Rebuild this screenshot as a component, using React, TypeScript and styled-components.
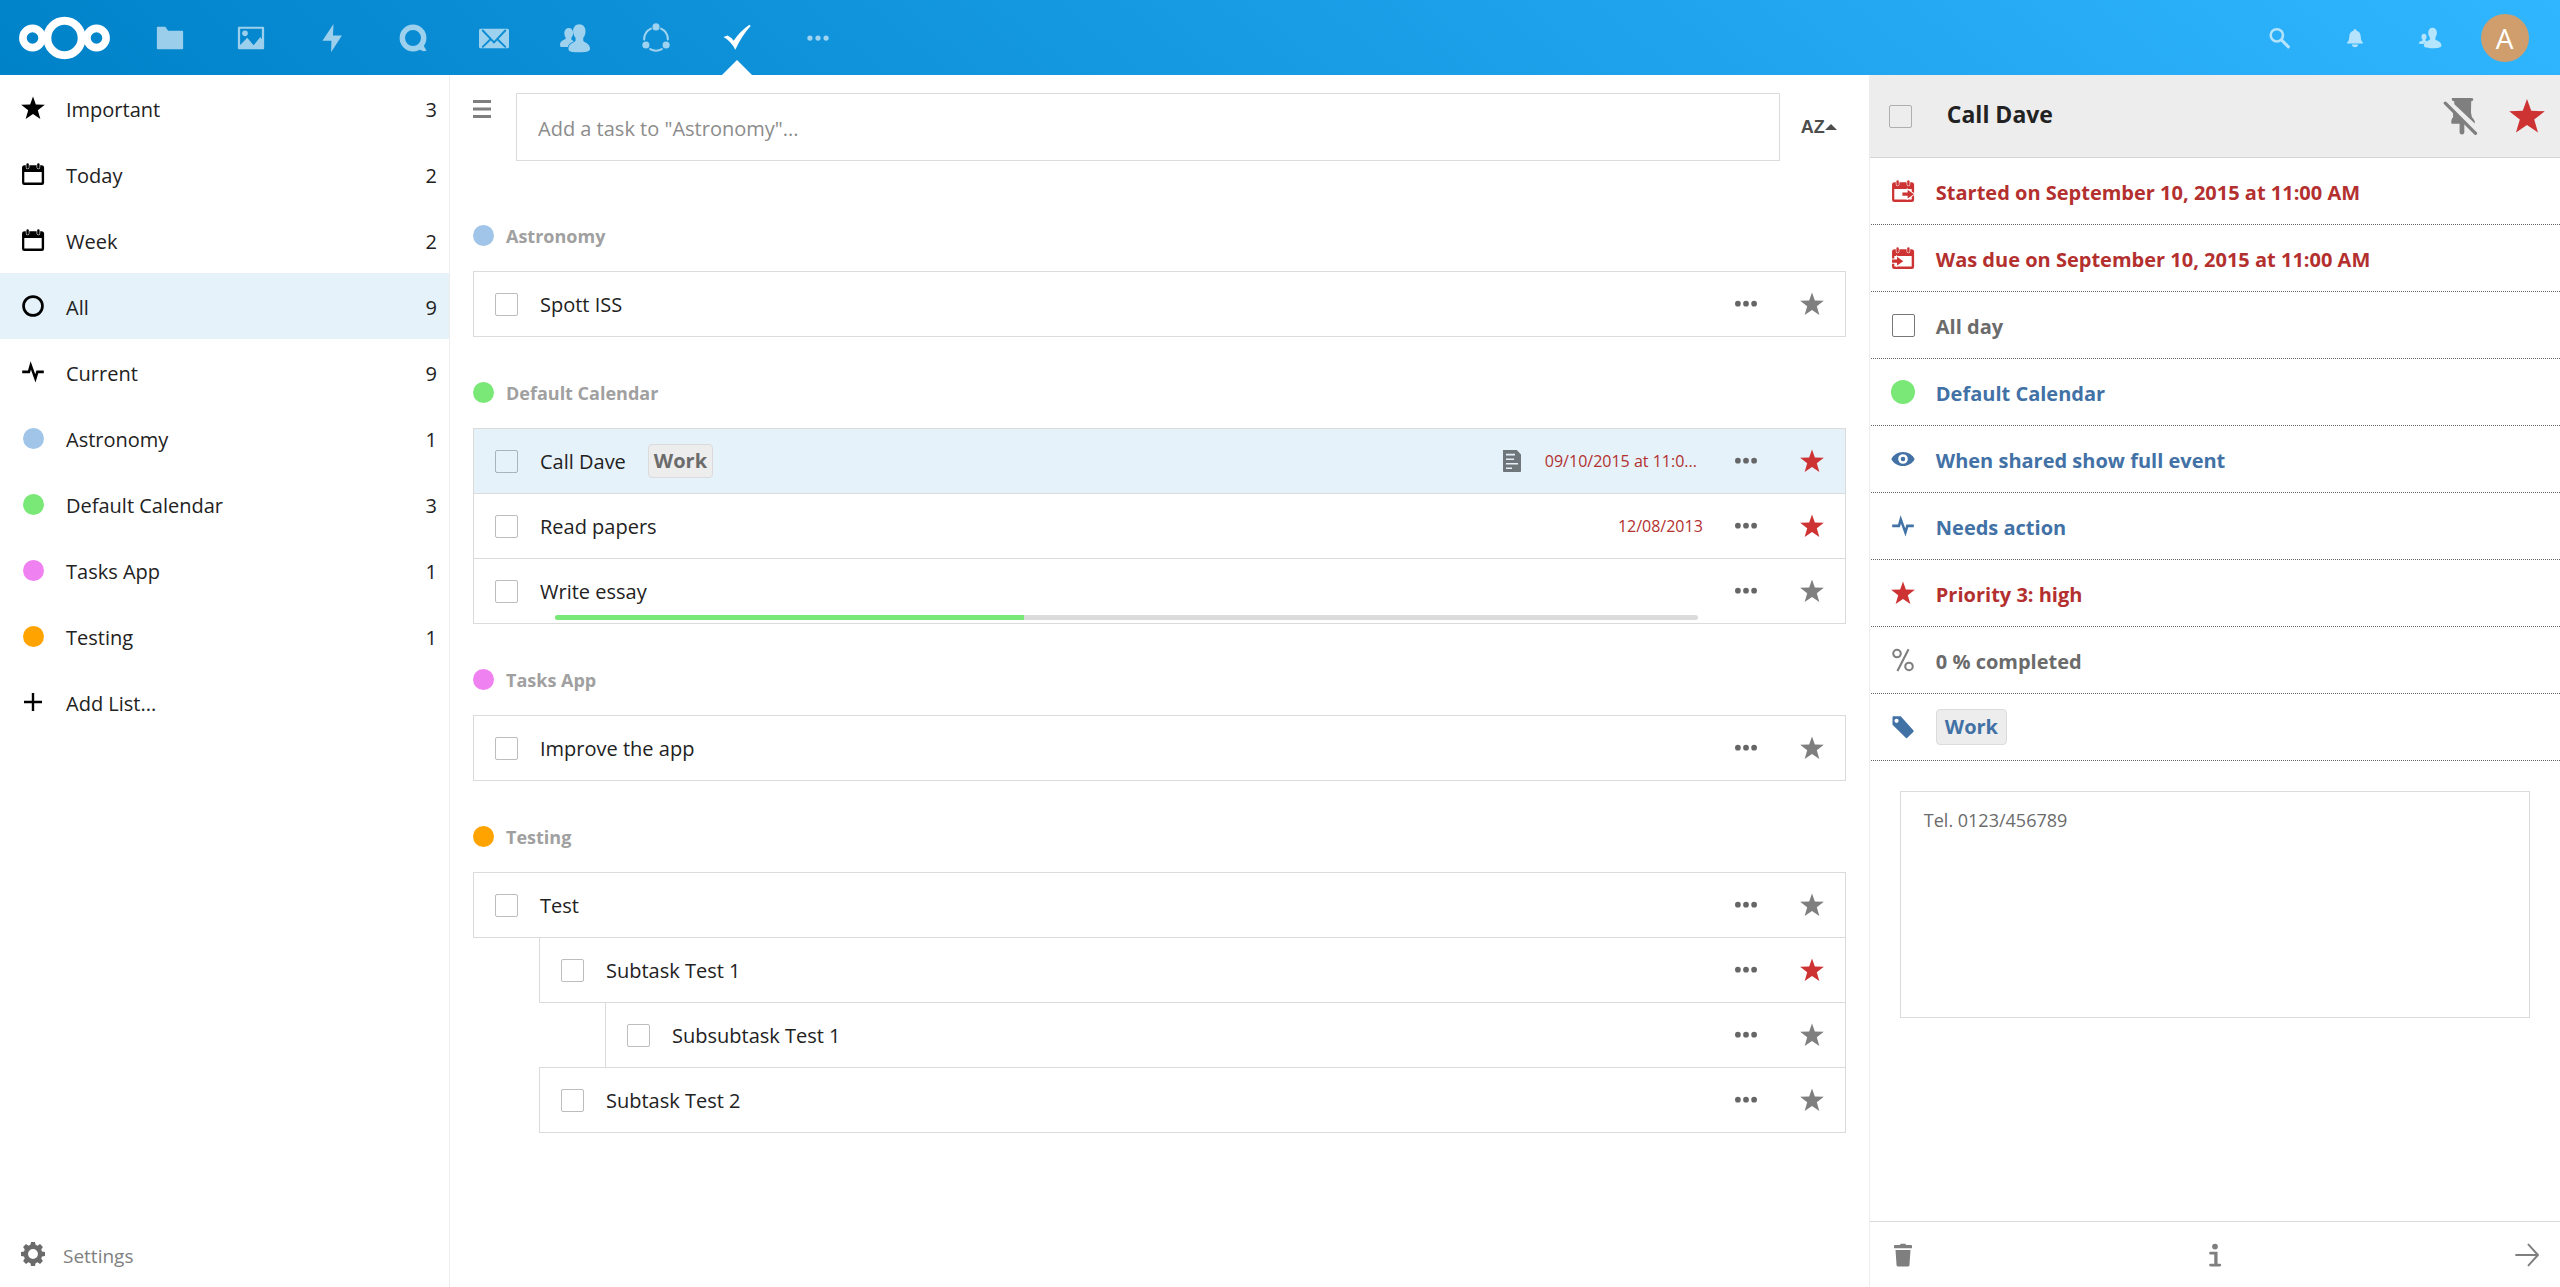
import React from "react";
import styled, { createGlobalStyle } from "styled-components";

const C = {
  text: "#222",
  muted: "#6b6b6b",
  icon: "#7f7f7f",
  line: "#dbdbdb",
  soft: "#ededed",
  active: "#e5f2fa",
  red: "#b3302f",
  star: "#ce3333",
  blue: "#4271a6",
};

const GlobalStyle = createGlobalStyle`
  *, *::before, *::after { box-sizing: border-box; }
  body {
    margin: 0;
    background: #fff;
    color: ${C.text};
    font-family: "Open Sans", "Noto Sans", sans-serif;
    font-size: 20px;
    line-height: 28px;
  }
  button, input, textarea { font: inherit; color: inherit; }
  ul, h1, h2 { margin: 0; padding: 0; list-style: none; font-size: inherit; }
  svg { display: block; flex: none; }
`;

const Page = styled.div`
  min-height: 100vh;
  display: flex;
  flex-direction: column;
`;

const Header = styled.header`
  height: 75px;
  display: flex;
  justify-content: space-between;
  background: linear-gradient(40deg, #0082c9 0%, #30b6ff 100%);
  color: #fff;
`;

const HeaderGroup = styled.div`
  display: flex;
  align-items: center;
`;

const UserGroup = styled(HeaderGroup)`
  padding-right: 18px;
`;

const LogoLink = styled.a`
  display: flex;
  align-items: center;
  padding: 0 19px;
  color: #fff;
`;

const AppLink = styled.a<{ $active?: boolean }>`
  position: relative;
  width: 81px;
  height: 75px;
  display: flex;
  align-items: center;
  justify-content: center;
  color: #fff;
  svg { opacity: ${(p) => (p.$active ? 1 : 0.6)}; }
  &::after {
    content: "";
    display: ${(p) => (p.$active ? "block" : "none")};
    position: absolute;
    bottom: 0;
    left: 50%;
    margin-left: -15px;
    border: 15px solid transparent;
    border-top-width: 0;
    border-bottom-color: #fff;
  }
`;

const IconButton = styled.button<{ $w: number; $h: number; $color?: string }>`
  width: ${(p) => p.$w}px;
  height: ${(p) => p.$h}px;
  padding: 0;
  border: 0;
  background: none;
  display: flex;
  flex: none;
  align-items: center;
  justify-content: center;
  color: ${(p) => p.$color || C.icon};
  cursor: pointer;
`;

const MenuButton = styled(IconButton)`
  color: #fff;
  svg { opacity: 0.65; }
`;

const Avatar = styled.span`
  width: 48px;
  height: 48px;
  border-radius: 50%;
  background: #cf9e6c;
  color: #fff;
  display: flex;
  align-items: center;
  justify-content: center;
  font-size: 28px;
`;

const Body = styled.div`
  flex: 1;
  display: flex;
`;

const Sidebar = styled.nav`
  width: 450px;
  flex: none;
  display: flex;
  flex-direction: column;
  justify-content: space-between;
  border-right: 1px solid ${C.soft};
`;

const NavLink = styled.a<{ $active?: boolean }>`
  height: 66px;
  display: flex;
  align-items: center;
  padding-right: 12px;
  background: ${(p) => (p.$active ? C.active : "transparent")};
  color: ${C.text};
  text-decoration: none;
`;

const NavIcon = styled.span`
  width: 66px;
  display: flex;
  justify-content: center;
  color: #000;
`;

const NavLabel = styled.span`
  flex: 1;
  padding-top: 3px;
`;

const NavCount = styled.span`
  padding-top: 3px;
`;

const SettingsButton = styled.button`
  height: 66px;
  display: flex;
  align-items: center;
  gap: 18px;
  padding: 0 21px;
  border: 0;
  background: none;
  color: ${C.muted};
  text-align: left;
`;

const SettingsLabel = styled.span`
  padding-top: 3px;
  color: #808080;
  font-size: 19px;
`;

const Dot = styled.span<{ $color: string; $size?: number }>`
  width: ${(p) => p.$size || 21}px;
  height: ${(p) => p.$size || 21}px;
  border-radius: 50%;
  background: ${(p) => p.$color};
`;

const Main = styled.main`
  flex: 1;
  min-width: 0;
  padding: 18px 23px;
`;

const Toolbar = styled.form`
  display: flex;
  margin-bottom: 19px;
`;

const ViewToggle = styled(IconButton)`
  justify-content: flex-start;
`;

const AddInput = styled.input`
  flex: 1;
  height: 68px;
  padding: 2px 21px 0;
  border: 1px solid ${C.line};
  border-radius: 0;
  outline: 0;
  &::placeholder { color: #8c8c8c; opacity: 1; }
`;

const SortButton = styled.button`
  width: 66px;
  padding: 0 9px 0 0;
  border: 0;
  background: none;
  display: flex;
  align-items: center;
  justify-content: flex-end;
  color: #4d4d4d;
  font-family: "Liberation Sans", Arial, sans-serif;
  font-size: 18px;
  font-weight: 700;
`;

const GroupHeading = styled.h2`
  height: 91px;
  padding-top: 19px;
  display: flex;
  align-items: center;
  gap: 12px;
  color: #a0a0a0;
  font-size: 18px;
  font-weight: 700;
`;

const GroupName = styled.span`
  padding-top: 2px;
`;

const TaskRow = styled.li<{ $level?: number; $active?: boolean }>`
  position: relative;
  height: 66px;
  margin-left: ${(p) => (p.$level || 0) * 66}px;
  padding-left: 21px;
  display: flex;
  align-items: center;
  border: 1px solid ${C.line};
  background: ${(p) => (p.$active ? C.active : "#fff")};
  & + & { margin-top: -1px; }
`;

const Checkbox = styled.input<{ $dark?: boolean }>`
  appearance: none;
  flex: none;
  width: 23px;
  height: 23px;
  margin: 0;
  border: 1px solid ${(p) => (p.$dark ? "#777" : "rgba(0, 0, 0, 0.26)")};
  border-radius: 2px;
`;

const TaskTitle = styled.label`
  margin-left: 22px;
  padding-top: 2px;
`;

const Tag = styled.span<{ $color: string }>`
  margin-left: 22px;
  padding: 1px 5px;
  border: 1px solid ${C.line};
  border-radius: 4px;
  background: ${C.soft};
  color: ${(p) => p.$color};
  font-weight: 700;
  line-height: 30px;
`;

const DetailTag = styled(Tag)`
  margin-left: 0;
  padding: 2px 8px;
`;

const RowEnd = styled.div`
  margin-left: auto;
  display: flex;
  align-items: center;
`;

const DueDate = styled.span`
  width: 158px;
  margin-left: 21px;
  margin-right: 10px;
  color: ${C.red};
  font-size: 16px;
`;

const DueDateEnd = styled(DueDate)`
  text-align: right;
`;

const Track = styled.div`
  position: absolute;
  left: 81px;
  right: 147px;
  bottom: 3px;
  height: 5px;
  border-radius: 3px;
  background: ${C.line};
  overflow: hidden;
`;

const Bar = styled.div`
  height: 100%;
  background: #7ae876;
`;

const Details = styled.aside`
  width: 27vw;
  flex: none;
  display: flex;
  flex-direction: column;
  border-left: 1px solid ${C.soft};
`;

const DetailsHeader = styled.div`
  height: 83px;
  padding-left: 19px;
  display: flex;
  align-items: center;
  background: ${C.soft};
  border-bottom: 1px solid #d6d6d6;
`;

const DetailsTitle = styled.h1`
  flex: 1;
  margin-left: 35px;
  padding-bottom: 4px;
  font-size: 23px;
  font-weight: 700;
`;

const Row = styled.li`
  height: 67px;
  margin-left: 1px;
  border-bottom: 1px dotted #666;
`;

const RowButton = styled.button<{ $color: string }>`
  width: 100%;
  height: 100%;
  padding: 0;
  border: 0;
  background: none;
  display: flex;
  align-items: center;
  text-align: left;
  color: ${(p) => p.$color};
  font-size: 20px;
  font-weight: 700;
`;

const RowText = styled.span`
  padding-top: 3px;
`;

const RowIcon = styled.span<{ $color?: string }>`
  width: 65px;
  display: flex;
  justify-content: center;
  color: ${(p) => p.$color || "inherit"};
`;

const Note = styled.textarea`
  height: 227px;
  margin: 30px 30px 0;
  padding: 14px 23px;
  border: 1px solid ${C.line};
  color: ${C.muted};
  font-size: 18px;
  line-height: 28px;
  resize: none;
  outline: 0;
`;

const DetailsFooter = styled.footer`
  height: 66px;
  margin-top: auto;
  display: flex;
  align-items: center;
  justify-content: space-between;
  border-top: 1px solid ${C.line};
`;

type IconProps = { size?: number; children: React.ReactNode };
const Icon = ({ size = 24, children }: IconProps) => (
  <svg width={size} height={size} viewBox="0 0 16 16" fill="currentColor" aria-hidden="true">
    {children}
  </svg>
);

const Logo = () => (
  <svg width="91" height="44" viewBox="0 0 91 44" fill="none" stroke="#fff" aria-hidden="true">
    <circle cx="13.5" cy="22" r="9.6" strokeWidth="7.6" />
    <circle cx="45.5" cy="22" r="17.2" strokeWidth="8" />
    <circle cx="77.5" cy="22" r="9.6" strokeWidth="7.6" />
  </svg>
);

const STAR = "M8 .4 9.9 5.7 15.9 5.9 11.2 9.5 12.9 15.3 8 12 3.1 15.3 4.8 9.5 .1 5.9 6.1 5.7Z";
const StarIcon = ({ size }: { size?: number }) => (
  <Icon size={size}><path d={STAR} /></Icon>
);
const calendarShell = (
  <>
    <path fillRule="evenodd" d="M2.300 2.200h.9v1.300q0 1.400 1.200 1.400t1.200-1.400V2.200h4.800v1.300q0 1.400 1.200 1.400t1.200-1.400V2.200h.9q1.700 0 1.700 1.700v10q0 1.500-1.500 1.500H2.200Q.7 15.400.7 13.900v-10Q.7 2.200 2.300 2.200ZM2.200 6.700v7h11.600v-7Z" />
    <rect x="3.600" y=".9" width="1.600" height="3.600" rx=".8" />
    <rect x="10.800" y=".9" width="1.600" height="3.600" rx=".8" />
  </>
);
const CalendarIcon = () => <Icon>{calendarShell}</Icon>;
const StartIcon = () => (
  <Icon>
    {calendarShell}
    <path d="M7.600 9h3.500V7.200l4.200 2.900-4.200 2.900v-1.800H7.600Z" stroke="#fff" strokeWidth="1.200" paintOrder="stroke" />
  </Icon>
);
const DueIcon = () => (
  <Icon>
    {calendarShell}
    <path d="M.7 9H4V7.200l4.200 2.900L4 13v-1.800H.7Z" stroke="#fff" strokeWidth="1.200" paintOrder="stroke" />
  </Icon>
);
const RingIcon = () => (
  <Icon><circle cx="8" cy="8" r="6.300" fill="none" stroke="currentColor" strokeWidth="1.800" /></Icon>
);
const PulseIcon = () => (
  <Icon>
    <path
      d="M.8 7.900H5.300L6.500 3.600 9.600 12.300 10.900 7.900H15.200"
      fill="none"
      stroke="currentColor"
      strokeWidth="1.700"
      strokeMiterlimit="10"
    />
  </Icon>
);
const PlusIcon = () => (
  <Icon><path d="M7.200 2h1.600v5.200H14v1.600H8.800V14H7.200V8.800H2V7.200h5.200Z" /></Icon>
);
const GearIcon = () => (
  <Icon>
    <path
      fillRule="evenodd"
      transform="translate(0 -.9)"
      d="M6.700.9h2.600l.4 1.900 1.300.6 1.700-1.100 1.900 1.900-1.100 1.700.5 1.300 2 .4v2.600l-2 .4-.5 1.300 1.100 1.700-1.900 1.900-1.700-1.100-1.300.6-.4 1.900H6.700l-.4-1.900-1.300-.6-1.700 1.100-1.900-1.900 1.100-1.700L2 10.600l-2-.4V7.600l2-.4.5-1.300-1.100-1.700 1.900-1.900L5 3.400l1.300-.6ZM8 5.600a3.300 3.300 0 1 0 0 6.600 3.300 3.300 0 0 0 0-6.600Z"
    />
  </Icon>
);
const MoreIcon = () => (
  <Icon>
    <circle cx="2.600" cy="7.800" r="1.900" />
    <circle cx="8" cy="7.800" r="1.900" />
    <circle cx="13.400" cy="7.800" r="1.900" />
  </Icon>
);
const NoteIcon = () => (
  <Icon>
    <path
      fillRule="evenodd"
      d="M2 .6h9.200L14 3.600v11.200q0 .5-.5.500h-11q-.5 0-.5-.5ZM4 3.200v1.100h6V3.200ZM4 6.300v1.100h5.400V6.300ZM4 9.300v1.100h8V9.300ZM4 12.300v1.100h4v-1.100Z"
    />
  </Icon>
);
const EyeIcon = () => (
  <Icon>
    <path
      fillRule="evenodd"
      d="M8 3.300C4.400 3.300 1.400 5.500.2 8c1.200 2.500 4.200 4.700 7.800 4.700s6.600-2.200 7.800-4.700C14.600 5.500 11.600 3.300 8 3.300Zm0 1.500a3.200 3.200 0 1 1 0 6.400 3.200 3.200 0 0 1 0-6.400Z"
    />
    <circle cx="8" cy="8" r="1.500" />
  </Icon>
);
const PercentIcon = () => (
  <Icon>
    <g fill="none" stroke="currentColor" strokeWidth="1.400">
      <circle cx="4" cy="3.700" r="2.500" />
      <circle cx="12" cy="12.300" r="2.500" />
      <path d="M11.700.9 4.300 15.400" />
    </g>
  </Icon>
);
const TagIcon = () => (
  <Icon>
    <path fillRule="evenodd" d="M1 1.300Q1 .8 1.500.8H6.500L15 10.400q.3.400 0 .8l-4.300 4.200q-.4.300-.7 0L1 6.500ZM3.700 2.500a1.400 1.400 0 1 0 0 2.800 1.400 1.400 0 0 0 0-2.800Z" />
  </Icon>
);
const TrashIcon = () => (
  <Icon>
    <path d="M6.500.5h3l.6.9h3.300q.6 0 .6.700v1.400H2V2.100q0-.7.6-.7h3.300ZM3 4.600h10L12.300 14.900q-.1.700-.8.700h-7q-.7 0-.8-.7Z" />
  </Icon>
);
const InfoIcon = () => (
  <Icon>
    <circle cx="8" cy="2.400" r="1.900" />
    <path d="M5 5.800h4.700v8H11.200q.9 0 .9.900t-.9.900H5q-.9 0-.9-.9t.9-.9h2.500V7.700H5q-.9 0-.9-.95T5 5.800Z" />
  </Icon>
);
const ArrowIcon = () => (
  <Icon>
    <path d="M.7 8H15M9 1.100 15.300 8 9 14.900" fill="none" stroke="currentColor" strokeWidth="1.300" strokeLinecap="round" strokeLinejoin="round" />
  </Icon>
);
const PinOffIcon = () => (
  <Icon size={38}>
    <g transform="translate(-.6 0)">
      <path d="M5 .4h7.900q.9 0 .9.600 0 .7-.9.800l-.1 4.700q.1 1.900 1.200 3 .6.700.4 1.700L5.800 3 5.700 1.800q-1-.1-1-.8 0-.6.3-.6ZM5.200 5.900 10.600 11.300H10v3.600q-.1.900-1 .9t-1-.9v-3.600H4.600q-.4-1.700.7-2.900Z" />
      <path d="M2 2.600 14.700 15.300" stroke="currentColor" strokeWidth="1.400" strokeLinecap="round" />
    </g>
  </Icon>
);

const FolderIcon = () => (
  <Icon size={30}><path d="M1.500 2h4L7 4.200h7.500q.5 0 .5.500v8.800q0 .5-.5.500h-13q-.5 0-.5-.5v-11Q1 2 1.500 2Z" /></Icon>
);
const PictureIcon = () => (
  <Icon size={30}>
    <path fillRule="evenodd" d="M1.500 2h13q.5 0 .5.500v11q0 .5-.5.500h-13q-.5 0-.5-.5v-11q0-.5.500-.5ZM2.200 3v8.700L6 7.800l3.400 4 3.600-4.300.8 1.200V3Z" />
    <circle cx="4.800" cy="5.500" r="1.500" />
  </Icon>
);
const BoltIcon = () => (
  <Icon size={30}><path d="M8.800.5 2.900 9.500h4.800L7.500 15.600 13.300 6.700H8.500Z" /></Icon>
);
const TalkIcon = () => (
  <Icon size={30}>
    <circle cx="8" cy="8" r="5.700" fill="none" stroke="currentColor" strokeWidth="2.900" />
    <path d="M10.500 13.500 13.400 10.500Q13.900 13.300 15.200 14.600 13 15.800 10.500 13.500Z" />
  </Icon>
);
const MailIcon = () => (
  <Icon size={30}>
    <mask id="mail-lines">
      <rect width="16" height="16" fill="#fff" />
      <path d="M2 4 8 10.300 14 4M2 12.700 6 8.800M14 12.700 10 8.800" fill="none" stroke="#000" strokeWidth="1" strokeLinecap="round" />
    </mask>
    <rect x="0" y="3" width="16" height="10.500" rx=".8" mask="url(#mail-lines)" />
  </Icon>
);
const ContactsIcon = () => (
  <Icon size={30}>
    <path d="M4.700 2.600c1.400 0 2.300 1.100 2.300 2.600 0 1-.3 1.900-.9 2.600v1.100l1.300.8c-1.800.8-3 1.700-3.200 3.100H.7q-.7 0-.7-1c0-1.700 1.200-2.500 3-3.200V7.700c-.5-.7-.7-1.600-.7-2.500 0-1.500 1-2.600 2.400-2.600Z" />
    <path d="M10.300.7c2 0 3.300 1.500 3.300 3.600 0 1.500-.4 2.800-1.200 3.600V9.400c.2.900 3.600 1.300 3.600 4.200 0 1.200-.8 2-6 2s-5.500-.8-5.500-2c0-2.900 3.500-3.300 3.800-4.200V7.900C7.500 7.100 7 5.800 7 4.300 7 2.200 8.300.7 10.300.7Z" />
  </Icon>
);
const CirclesIcon = () => (
  <Icon size={30}>
    <g fill="none" stroke="currentColor" strokeWidth="1.100" strokeLinecap="round">
      <path d="M5.300 3A6.300 6.300 0 0 0 1.700 8.800M10.700 3A6.300 6.300 0 0 1 14.300 8.800M4.900 13.900A6.300 6.300 0 0 0 11.100 13.900" />
    </g>
    <circle cx="8" cy="2.100" r="1.900" />
    <circle cx="2.600" cy="11.700" r="1.900" />
    <circle cx="13.400" cy="11.700" r="1.900" />
  </Icon>
);
const CheckIcon = () => (
  <Icon size={30}><path d="M.8 7.500 3 6.600Q5 7.600 6.200 9.400 9.800 4.200 14.600.9L15.300 1.600Q10.600 6.600 7.100 14.300 4.500 9.400.8 7.500Z" /></Icon>
);
const AppsMoreIcon = () => (
  <Icon size={30}>
    <circle cx="3.700" cy="8" r="1.400" />
    <circle cx="8" cy="8" r="1.400" />
    <circle cx="12.300" cy="8" r="1.400" />
  </Icon>
);
const SearchIcon = () => (
  <Icon>
    <g fill="none" stroke="currentColor" strokeLinecap="round">
      <circle cx="5.900" cy="6.200" r="4.100" strokeWidth="1.700" />
      <path d="M9.300 9.600 13.600 13.900" strokeWidth="2" />
    </g>
  </Icon>
);
const BellIcon = () => (
  <Icon>
    <path d="M8 2q.9 0 .9 1c2 .6 2.800 2.200 2.900 4 .1 2 .4 3.100 1.500 4v.7H2.700V11c1.100-.9 1.400-2 1.500-4 .1-1.800.9-3.400 2.900-4Q7.100 2 8 2ZM5.900 12.300h4.200q-.3 1.800-2.100 1.800t-2.100-1.800Z" />
  </Icon>
);
const PeopleIcon = () => (
  <Icon>
    <path d="M9.700 1.200c1.800 0 2.900 1.400 2.900 3.200 0 1.300-.4 2.400-1 3.200v1.400c.3.800 4 1.200 4 3.800 0 1.500-2 2-5.800 2s-5.900-.5-5.900-2c0-2.600 3.700-3 4-3.800V7.600c-.7-.8-1.100-1.900-1.100-3.200 0-1.800 1.100-3.200 2.900-3.200Z" />
    <path d="M4 5.200c1 0 1.700.8 1.700 1.900 0 .8-.3 1.500-.7 1.900v.7l1.100.4q-1.700.7-2.600 1.900Q.6 12 .6 11.300c0-1 1.400-1.100 2.400-1.600V9c-.4-.4-.7-1.100-.7-1.900C2.300 6 3 5.200 4 5.200Z" />
  </Icon>
);

const apps = [
  { name: "Files", icon: <FolderIcon /> },
  { name: "Photos", icon: <PictureIcon /> },
  { name: "Activity", icon: <BoltIcon /> },
  { name: "Talk", icon: <TalkIcon /> },
  { name: "Mail", icon: <MailIcon /> },
  { name: "Contacts", icon: <ContactsIcon /> },
  { name: "Circles", icon: <CirclesIcon /> },
  { name: "Tasks", icon: <CheckIcon />, active: true },
  { name: "More apps", icon: <AppsMoreIcon /> },
];

const ASTRO = "#a0c5e8";
const GREEN = "#7ae876";
const PINK = "#f081f0";
const ORANGE = "#ffa300";

const navItems: { label: string; count?: number; icon: React.ReactNode; active?: boolean }[] = [
  { label: "Important", count: 3, icon: <StarIcon /> },
  { label: "Today", count: 2, icon: <CalendarIcon /> },
  { label: "Week", count: 2, icon: <CalendarIcon /> },
  { label: "All", count: 9, icon: <RingIcon />, active: true },
  { label: "Current", count: 9, icon: <PulseIcon /> },
  { label: "Astronomy", count: 1, icon: <Dot $color={ASTRO} /> },
  { label: "Default Calendar", count: 3, icon: <Dot $color={GREEN} /> },
  { label: "Tasks App", count: 1, icon: <Dot $color={PINK} /> },
  { label: "Testing", count: 1, icon: <Dot $color={ORANGE} /> },
  { label: "Add List...", icon: <PlusIcon /> },
];

type Task = {
  title: string;
  level?: number;
  active?: boolean;
  starred?: boolean;
  tag?: string;
  note?: boolean;
  due?: string;
  progress?: number;
};

const groups: { name: string; color: string; tasks: Task[] }[] = [
  { name: "Astronomy", color: ASTRO, tasks: [{ title: "Spott ISS" }] },
  {
    name: "Default Calendar",
    color: GREEN,
    tasks: [
      { title: "Call Dave", tag: "Work", note: true, due: "09/10/2015 at 11:0...", starred: true, active: true },
      { title: "Read papers", due: "12/08/2013", starred: true },
      { title: "Write essay", progress: 41 },
    ],
  },
  { name: "Tasks App", color: PINK, tasks: [{ title: "Improve the app" }] },
  {
    name: "Testing",
    color: ORANGE,
    tasks: [
      { title: "Test" },
      { title: "Subtask Test 1", level: 1, starred: true },
      { title: "Subsubtask Test 1", level: 2 },
      { title: "Subtask Test 2", level: 1 },
    ],
  },
];

const TaskItem = ({ task }: { task: Task }) => {
  const id = "task-" + task.title.toLowerCase().replace(/\s+/g, "-");
  const Due = task.note ? DueDate : DueDateEnd;
  return (
    <TaskRow $level={task.level} $active={task.active}>
      <Checkbox type="checkbox" id={id} />
      <TaskTitle htmlFor={id}>{task.title}</TaskTitle>
      {task.tag && <Tag $color={C.muted}>{task.tag}</Tag>}
      <RowEnd>
        {task.note && (
          <IconButton type="button" $w={24} $h={24} $color="#70777b" aria-label="Show note">
            <NoteIcon />
          </IconButton>
        )}
        {task.due && <Due>{task.due}</Due>}
        <IconButton type="button" $w={66} $h={64} $color="#666" aria-label="Task actions">
          <MoreIcon />
        </IconButton>
        <IconButton type="button" $w={66} $h={64} $color={task.starred ? C.star : C.icon} aria-label="Toggle starred">
          <StarIcon />
        </IconButton>
      </RowEnd>
      {task.progress !== undefined && (
        <Track>
          <Bar style={{ width: `${task.progress}%` }} />
        </Track>
      )}
    </TaskRow>
  );
};

const detailRows: { text: string; color: string; iconColor?: string; icon: React.ReactNode; tag?: boolean; check?: boolean }[] = [
  { text: "Started on September 10, 2015 at 11:00 AM", color: C.red, iconColor: C.star, icon: <StartIcon /> },
  { text: "Was due on September 10, 2015 at 11:00 AM", color: C.red, iconColor: C.star, icon: <DueIcon /> },
  { text: "All day", color: C.muted, icon: <Checkbox type="checkbox" id="all-day" $dark />, check: true },
  { text: "Default Calendar", color: C.blue, icon: <Dot $color={GREEN} $size={24} /> },
  { text: "When shared show full event", color: C.blue, icon: <EyeIcon /> },
  { text: "Needs action", color: C.blue, icon: <PulseIcon /> },
  { text: "Priority 3: high", color: C.red, iconColor: C.star, icon: <StarIcon /> },
  { text: "0 % completed", color: C.muted, iconColor: C.icon, icon: <PercentIcon /> },
  { text: "Work", color: C.blue, icon: <TagIcon />, tag: true },
];

export default function App() {
  return (
    <Page>
      <GlobalStyle />
      <Header>
        <HeaderGroup>
          <LogoLink href="#home" aria-label="Home">
            <Logo />
          </LogoLink>
          {apps.map((a) => (
            <AppLink key={a.name} href={"#" + a.name.toLowerCase().replace(" ", "-")} aria-label={a.name} $active={a.active}>
              {a.icon}
            </AppLink>
          ))}
        </HeaderGroup>
        <UserGroup>
          <MenuButton type="button" $w={75} $h={75} aria-label="Search"><SearchIcon /></MenuButton>
          <MenuButton type="button" $w={75} $h={75} aria-label="Notifications"><BellIcon /></MenuButton>
          <MenuButton type="button" $w={75} $h={75} aria-label="Contacts menu"><PeopleIcon /></MenuButton>
          <MenuButton type="button" $w={75} $h={75} aria-label="Account"><Avatar>A</Avatar></MenuButton>
        </UserGroup>
      </Header>
      <Body>
        <Sidebar>
          <ul>
            {navItems.map((n) => (
              <li key={n.label}>
                <NavLink href="#list" $active={n.active}>
                  <NavIcon>{n.icon}</NavIcon>
                  <NavLabel>{n.label}</NavLabel>
                  {n.count !== undefined && <NavCount>{n.count}</NavCount>}
                </NavLink>
              </li>
            ))}
          </ul>
          <SettingsButton type="button">
            <GearIcon />
            <SettingsLabel>Settings</SettingsLabel>
          </SettingsButton>
        </Sidebar>
        <Main>
          <Toolbar>
            <ViewToggle type="button" $w={43} $h={32} aria-label="Toggle view">
              <svg width="18" height="18" viewBox="0 0 18 18" fill="currentColor" aria-hidden="true">
                <path d="M0 0h18v3H0ZM0 7.500h18v3H0ZM0 15h18v3H0Z" />
              </svg>
            </ViewToggle>
            <AddInput type="text" aria-label="Add a task" placeholder={'Add a task to "Astronomy"...'} />
            <SortButton type="button" aria-label="Sort order">
              AZ
              <svg width="12" height="6" viewBox="0 0 12 6" fill="currentColor" aria-hidden="true">
                <path d="M6 0 12 6H0Z" />
              </svg>
            </SortButton>
          </Toolbar>
          {groups.map((g) => (
            <section key={g.name}>
              <GroupHeading>
                <Dot $color={g.color} />
                <GroupName>{g.name}</GroupName>
              </GroupHeading>
              <ul>
                {g.tasks.map((t) => (
                  <TaskItem key={t.title} task={t} />
                ))}
              </ul>
            </section>
          ))}
        </Main>
        <Details>
          <DetailsHeader>
            <Checkbox type="checkbox" aria-label="Complete task" />
            <DetailsTitle>Call Dave</DetailsTitle>
            <IconButton type="button" $w={66} $h={66} aria-label="Pin task"><PinOffIcon /></IconButton>
            <IconButton type="button" $w={66} $h={66} $color={C.star} aria-label="Toggle starred"><StarIcon size={36} /></IconButton>
          </DetailsHeader>
          <ul>
            {detailRows.map((r) => (
              <Row key={r.text}>
                {r.check ? (
                  <RowButton as="label" htmlFor="all-day" $color={r.color}>
                    <RowIcon>{r.icon}</RowIcon>
                    <RowText>{r.text}</RowText>
                  </RowButton>
                ) : (
                  <RowButton type="button" $color={r.color}>
                    <RowIcon $color={r.iconColor}>{r.icon}</RowIcon>
                    {r.tag ? <DetailTag $color={r.color}>{r.text}</DetailTag> : <RowText>{r.text}</RowText>}
                  </RowButton>
                )}
              </Row>
            ))}
          </ul>
          <Note aria-label="Note" defaultValue="Tel. 0123/456789" />
          <DetailsFooter>
            <IconButton type="button" $w={66} $h={66} aria-label="Delete task"><TrashIcon /></IconButton>
            <IconButton type="button" $w={66} $h={66} aria-label="Task information"><InfoIcon /></IconButton>
            <IconButton type="button" $w={66} $h={66} aria-label="Close details"><ArrowIcon /></IconButton>
          </DetailsFooter>
        </Details>
      </Body>
    </Page>
  );
}
